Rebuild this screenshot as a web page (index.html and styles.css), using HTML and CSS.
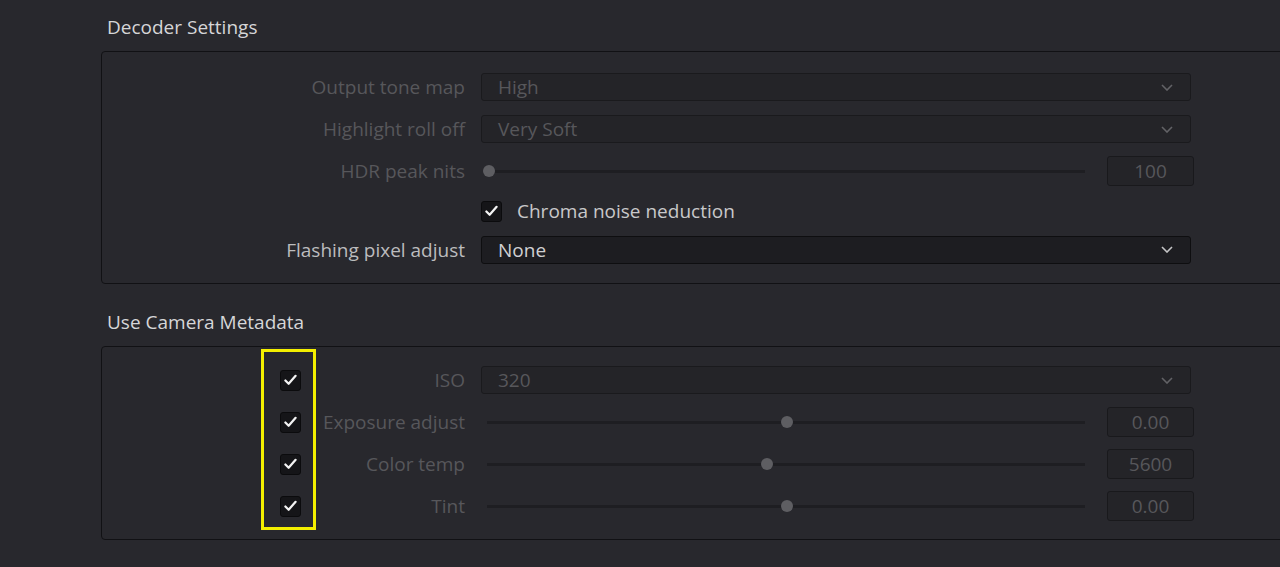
FILE: index.html
```html
<!DOCTYPE html>
<html lang="en">
<head>
    <meta charset="UTF-8">
    <meta name="viewport" content="width=device-width, initial-scale=1.0">
    <title>Camera Raw</title>
    <link rel="stylesheet" href="styles.css">
</head>
<body>
    <div class="page">
        <section class="group">
            <h3 class="group-title">Decoder Settings</h3>
            <div class="panel">
                <div class="row">
                    <label class="label off">Output tone map</label>
                    <div class="select off"><span>High</span><svg class="chev" viewBox="0 0 12 7"><polyline points="1,1 6,6 11,1"/></svg></div>
                </div>
                <div class="row">
                    <label class="label off">Highlight roll off</label>
                    <div class="select off"><span>Very Soft</span><svg class="chev" viewBox="0 0 12 7"><polyline points="1,1 6,6 11,1"/></svg></div>
                </div>
                <div class="row">
                    <label class="label off">HDR peak nits</label>
                    <div class="slider">
                        <div class="rail"><span class="thumb" style="left: 0%"></span></div>
                        <div class="value off">100</div>
                    </div>
                </div>
                <div class="row short">
                    <span class="label"></span>
                    <div class="check-line">
                        <span class="check"><svg viewBox="0 0 14 12"><polyline points="1.5,6.5 5,10 12.5,1.5"/></svg></span>
                        <span class="check-text">Chroma noise neduction</span>
                    </div>
                </div>
                <div class="row short">
                    <label class="label">Flashing pixel adjust</label>
                    <div class="select"><span>None</span><svg class="chev" viewBox="0 0 12 7"><polyline points="1,1 6,6 11,1"/></svg></div>
                </div>
            </div>
        </section>

        <section class="group">
            <h3 class="group-title">Use Camera Metadata</h3>
            <div class="panel meta">
                <div class="row">
                    <div class="label off">
                        <span class="check"><svg viewBox="0 0 14 12"><polyline points="1.5,6.5 5,10 12.5,1.5"/></svg></span>
                        <span>ISO</span>
                    </div>
                    <div class="select off"><span>320</span><svg class="chev" viewBox="0 0 12 7"><polyline points="1,1 6,6 11,1"/></svg></div>
                </div>
                <div class="row">
                    <div class="label off">
                        <span class="check"><svg viewBox="0 0 14 12"><polyline points="1.5,6.5 5,10 12.5,1.5"/></svg></span>
                        <span>Exposure adjust</span>
                    </div>
                    <div class="slider">
                        <div class="rail"><span class="thumb" style="left: 50%"></span></div>
                        <div class="value off">0.00</div>
                    </div>
                </div>
                <div class="row">
                    <div class="label off">
                        <span class="check"><svg viewBox="0 0 14 12"><polyline points="1.5,6.5 5,10 12.5,1.5"/></svg></span>
                        <span>Color temp</span>
                    </div>
                    <div class="slider">
                        <div class="rail"><span class="thumb" style="left: 46.6%"></span></div>
                        <div class="value off">5600</div>
                    </div>
                </div>
                <div class="row">
                    <div class="label off">
                        <span class="check"><svg viewBox="0 0 14 12"><polyline points="1.5,6.5 5,10 12.5,1.5"/></svg></span>
                        <span>Tint</span>
                    </div>
                    <div class="slider">
                        <div class="rail"><span class="thumb" style="left: 50%"></span></div>
                        <div class="value off">0.00</div>
                    </div>
                </div>
                <div class="highlight"></div>
            </div>
        </section>
    </div>
</body>
</html>
```

FILE: styles.css
```css
html, body {
    margin: 0;
    height: 100%;
    overflow: hidden;
}

body {
    background-color: #28282d;
    font-family: "Open Sans", "Noto Sans", sans-serif;
    font-size: 19px;
    color: #c4c4c6;
}

.page {
    padding-left: 101px;
}

.group + .group {
    margin-top: 11px;
}

.group-title {
    margin: 0;
    padding: 15px 0 12px 6px;
    font-size: 19px;
    font-weight: 400;
    line-height: 24px;
    color: #d6d6d8;
}

.panel {
    position: relative;
    margin-right: -20px;
    padding: 14px 0 14px;
    border: 1px solid #111114;
    border-radius: 4px;
    background-color: #28282d;
}

.panel.meta {
    padding: 12px 0 12px;
}

.row {
    display: grid;
    grid-template-columns: 363px 713px;
    column-gap: 16px;
    align-items: center;
    height: 42px;
}

.row.short {
    height: 38px;
}

.row.short + .row.short {
    height: 39px;
}

.label {
    text-align: right;
    white-space: nowrap;
    color: #bcbcbe;
}

.label.off {
    color: #57575b;
}

.meta .label {
    display: flex;
    justify-content: space-between;
    align-items: center;
    padding-left: 178px;
}

/* dropdowns */
.select {
    display: flex;
    justify-content: space-between;
    align-items: center;
    width: 710px;
    height: 28px;
    box-sizing: border-box;
    padding: 0 16px;
    border: 1px solid #0e0e10;
    border-radius: 3px;
    background-color: #1d1d21;
    color: #d0d0d2;
}

.select.off {
    border-color: #1a1a1d;
    background-color: #242428;
    color: #57575b;
}

.chev {
    width: 12px;
    height: 7px;
    margin-right: 1px;
    fill: none;
    stroke: #c4c4c6;
    stroke-width: 1.6;
}

.select.off .chev {
    stroke: #626266;
}

/* sliders */
.slider {
    display: flex;
    align-items: center;
}

.rail {
    position: relative;
    width: 596px;
    height: 3px;
    margin-left: 8px;
    background-color: #1e1e22;
    box-shadow: -2px 0 0 #1e1e22;
}

.thumb {
    position: absolute;
    top: 50%;
    width: 12px;
    height: 12px;
    border-radius: 50%;
    background-color: #5e5e62;
    transform: translate(-50%, -50%);
}

.value {
    width: 87px;
    height: 30px;
    box-sizing: border-box;
    margin-left: 22px;
    border: 1px solid #19191c;
    border-radius: 3px;
    background-color: #242428;
    text-align: center;
    line-height: 28px;
}

.value.off {
    color: #57575b;
}

/* checkboxes */
.check-line {
    display: flex;
    align-items: center;
    gap: 15px;
}

.check {
    display: flex;
    align-items: center;
    justify-content: center;
    width: 21px;
    height: 21px;
    box-sizing: border-box;
    border: 1px solid #0b0b0d;
    border-radius: 3px;
    background-color: #151518;
}

.check svg {
    width: 13px;
    height: 12px;
    fill: none;
    stroke: #f4f4f4;
    stroke-width: 2.4;
    stroke-linecap: round;
    stroke-linejoin: round;
}

.check-text {
    color: #c8c8ca;
}

/* marker around the metadata toggles */
.highlight {
    position: absolute;
    left: 159px;
    top: 2px;
    width: 49px;
    height: 175px;
    border: 3px solid #f4ef00;
}
```
